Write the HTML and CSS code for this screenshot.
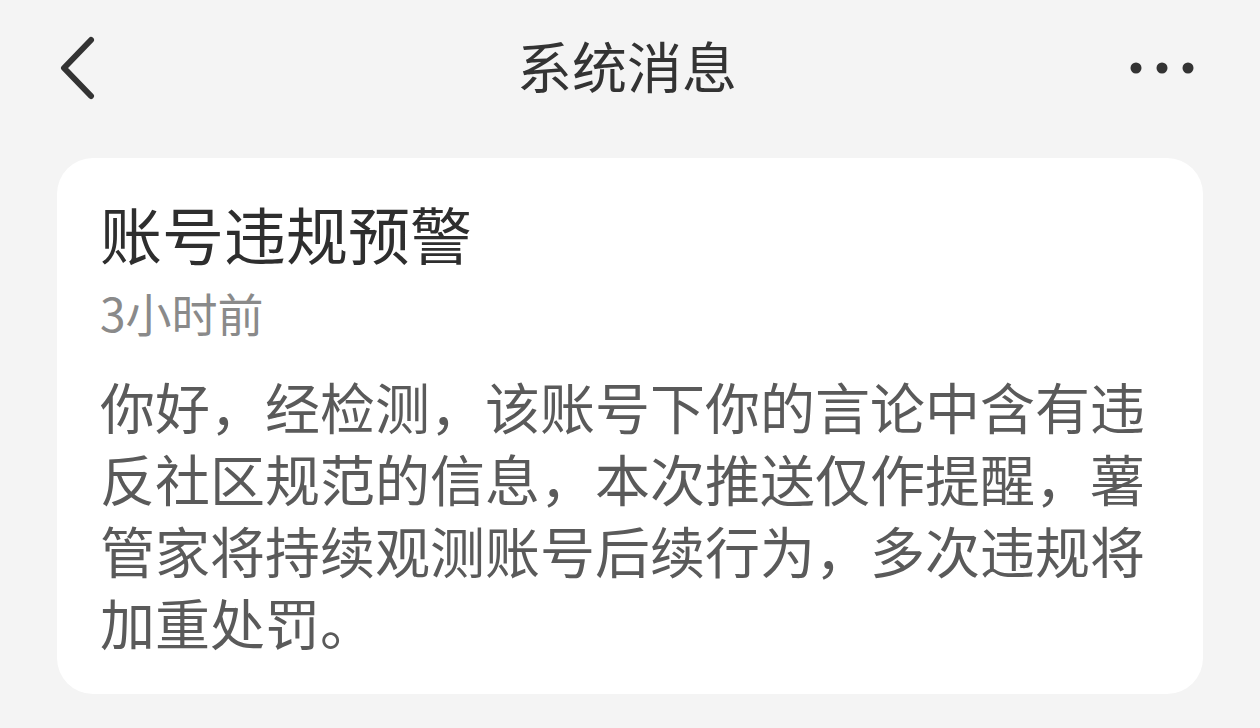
FILE: index.html
```html
<!DOCTYPE html>
<html lang="zh-CN">

<head>
    <meta charset="UTF-8">
    <meta name="viewport" content="width=device-width, initial-scale=1.0">
    <title>系统消息</title>
    <link rel="stylesheet" href="styles.css">
</head>

<body>

    <header class="top-bar">
        <a class="back" href="#">
            <svg width="40" height="70" viewBox="0 0 40 70">
                <polyline points="31,5 4,33 31,61" fill="none" stroke="#333" stroke-width="6"
                    stroke-linecap="round" stroke-linejoin="round" />
            </svg>
        </a>
        <h1 class="page-title">系统消息</h1>
        <button class="more" type="button">
            <svg width="64" height="14" viewBox="0 0 64 14">
                <circle cx="6" cy="7" r="5.5" fill="#333" />
                <circle cx="32" cy="7" r="5.5" fill="#333" />
                <circle cx="58" cy="7" r="5.5" fill="#333" />
            </svg>
        </button>
    </header>

    <main class="messages">
        <section class="msg-card">
            <h2 class="msg-title">账号违规预警</h2>
            <div class="msg-time">3小时前</div>
            <p class="msg-text">你好，经检测，该账号下你的言论中含有违反社区规范的信息，本次推送仅作提醒，薯管家将持续观测账号后续行为，多次违规将加重处罚。</p>
        </section>
    </main>

</body>

</html>
```

FILE: styles.css
```css
body {
    font-family: "Noto Sans CJK SC", "Noto Sans", sans-serif;
    margin: 0;
    padding: 0;
    background-color: #f4f4f4;
    color: #333;
}

.top-bar {
    height: 136px;
    display: grid;
    grid-template-columns: 1fr auto 1fr;
    align-items: center;
    padding: 0 66px 0 60px;
}

.back {
    display: flex;
    align-items: center;
    margin-top: 4px;
}

.page-title {
    margin: 0 0 8px;
    font-size: 55px;
    font-weight: 400;
    line-height: 1;
    color: #333;
}

.more {
    justify-self: end;
    display: flex;
    padding: 0;
    border: none;
    background: none;
    cursor: pointer;
}

.messages {
    padding: 22px 57px 0;
}

.msg-card {
    background-color: #fff;
    border-radius: 36px;
    padding: 38px 43px 37px;
}

.msg-title {
    margin: 0;
    font-size: 62px;
    font-weight: 400;
    line-height: 74px;
    color: #2e2e2e;
}

.msg-time {
    margin-top: 12px;
    font-size: 46px;
    line-height: 60px;
    color: #8a8a8a;
}

.msg-text {
    margin: 27px 0 0;
    font-size: 55px;
    line-height: 72px;
    color: #5a5a5a;
}
```
